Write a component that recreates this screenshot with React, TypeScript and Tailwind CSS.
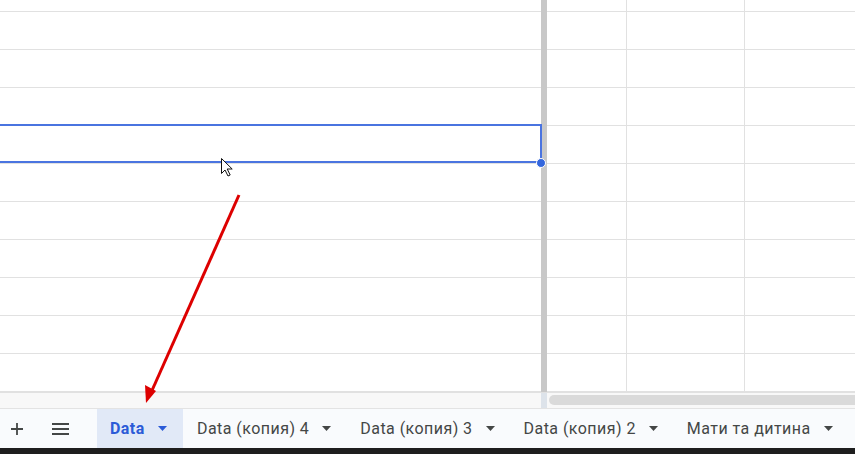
import React from "react";

const rows = Array.from({ length: 10 }, (_, i) => i);
const tabs = ["Data (копия) 4", "Data (копия) 3", "Data (копия) 2", "Мати та дитина"];

// Small dropdown caret used on every sheet tab.
const Caret = ({ className }: { className: string }) => (
  <svg width="9" height="5" viewBox="0 0 9 5" className={className}>
    <path d="M0 0h9L4.5 5z" fill="currentColor" />
  </svg>
);

// A column of cells: short first row, then rows of 38px.
const Column = ({ className, selected }: { className: string; selected?: boolean }) => (
  <div className={className}>
    <div className="h-[12px] border-b border-[#e1e1e1]" />
    {rows.map((i) => (
      <div key={i} className="relative h-[38px] border-b border-[#e1e1e1]">
        {selected && i === 3 && (
          <>
            <div className="absolute -left-[2px] -top-[2px] h-[39px] w-[544px] border-2 border-[#4a74e0]" />
            <div className="absolute left-[536px] top-[32px] z-10 h-[10px] w-[10px] rounded-full border border-white bg-[#3366dd]" />
          </>
        )}
      </div>
    ))}
  </div>
);

export default function App() {
  return (
    <div className="relative h-[454px] w-[855px] overflow-hidden bg-white font-['Roboto',sans-serif]">
      <div className="flex h-[392px]">
        <Column className="relative z-10 w-[541px] shrink-0" selected />
        <div className="w-[6px] shrink-0 bg-[#c8c8c8]" />
        <Column className="w-[80px] shrink-0 border-r border-[#e1e1e1]" />
        <Column className="w-[118px] shrink-0 border-r border-[#e1e1e1]" />
        <Column className="flex-1" />
      </div>

      <div className="flex h-[16px] border-t border-[#e1e1e1] bg-[#f8f8f8]">
        <div className="w-[541px] shrink-0" />
        <div className="w-[6px] shrink-0 bg-[#dde3ea]" />
        <div className="flex-1 pl-[2px] pt-[2px]">
          <div className="h-[10px] rounded-l-full bg-[#dadada]" />
        </div>
      </div>

      <div className="flex h-[40px] items-center whitespace-nowrap border-t border-[#e3e3e3] bg-[#f9fbfd] text-[16px] tracking-[0.45px] text-[#444746]">
        <div className="flex w-[33px] shrink-0 justify-center">
          <svg width="12" height="12" viewBox="0 0 12 12">
            <path d="M6 0v12M0 6h12" stroke="#444746" strokeWidth="1.8" />
          </svg>
        </div>
        <div className="flex w-[55px] shrink-0 justify-center">
          <svg width="17" height="12" viewBox="0 0 17 12">
            <path d="M0 1h17M0 6h17M0 11h17" stroke="#444746" strokeWidth="1.8" />
          </svg>
        </div>
        <div className="ml-[9px] flex h-full w-[86px] shrink-0 items-center bg-[#e1e9f7] pl-[13px] font-bold text-[#2b5bd7]">
          <span>Data</span>
          <Caret className="ml-[13px] text-[#2b5bd7]" />
        </div>
        {tabs.map((t) => (
          <div key={t} className="flex h-full shrink-0 items-center pl-[14px] pr-[15px]">
            <span>{t}</span>
            <Caret className="ml-[13px] text-[#444746]" />
          </div>
        ))}
      </div>

      <div className="h-[6px] bg-[#1e1e1e]" />

      <svg className="pointer-events-none absolute left-0 top-0 z-20" width="855" height="454">
        <path d="M239 195L150 395" stroke="#dd0000" strokeWidth="3" />
        <path d="M146 403L145 385L156 391z" fill="#dd0000" />
        <path
          d="M221.5 158.5v15l3.5-3.5 3 6 2.2-1-3-6h5z"
          fill="white"
          stroke="#111"
          strokeWidth="1"
          strokeLinejoin="round"
        />
      </svg>
    </div>
  );
}
